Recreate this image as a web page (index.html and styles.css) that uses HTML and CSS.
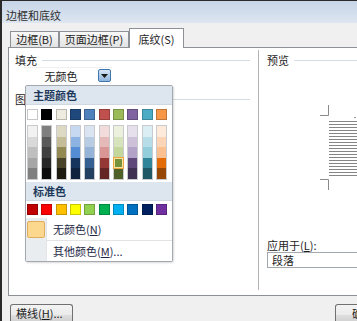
FILE: index.html
```html
<!DOCTYPE html>
<html lang="zh-CN">
<head>
<meta charset="utf-8">
<title>边框和底纹</title>
<link rel="stylesheet" href="styles.css">
</head>
<body>
<div class="window">
  <div class="titlebar">边框和底纹</div>
  <div class="tabs">
    <div class="tab tab1">边框(B)</div>
    <div class="tab tab2">页面边框(P)</div>
    <div class="tab tab3 active">底纹(S)</div>
  </div>
  <div class="panel">
    <div class="left">
      <div class="group"><span>填充</span><i class="rule"></i></div>
      <div class="combo">
        <span class="combo-text">无颜色</span>
        <span class="combo-btn"><svg width="7" height="4" viewBox="0 0 7 4"><path d="M0 0h7L3.5 4z" fill="#1a1a1a"/></svg></span>
      </div>
      <div class="group group2"><span>图案</span><i class="rule"></i></div>

      <div class="popup">
        <div class="phead">主题颜色</div>
        <div class="grid row1">
          <i class="sw" style="background:#ffffff"></i>
          <i class="sw" style="background:#000000"></i>
          <i class="sw" style="background:#eeece1"></i>
          <i class="sw" style="background:#1f497d"></i>
          <i class="sw" style="background:#4f81bd"></i>
          <i class="sw" style="background:#c0504d"></i>
          <i class="sw" style="background:#9bbb59"></i>
          <i class="sw" style="background:#8064a2"></i>
          <i class="sw" style="background:#4bacc6"></i>
          <i class="sw" style="background:#f79646"></i>
        </div>
        <div class="grid shades">
          <div class="col"><i style="background:#f2f2f2"></i><i style="background:#d9d9d9"></i><i style="background:#bfbfbf"></i><i style="background:#a6a6a6"></i><i style="background:#808080"></i></div>
          <div class="col"><i style="background:#7f7f7f"></i><i style="background:#595959"></i><i style="background:#3f3f3f"></i><i style="background:#262626"></i><i style="background:#0c0c0c"></i></div>
          <div class="col"><i style="background:#ddd9c3"></i><i style="background:#c4bd97"></i><i style="background:#938953"></i><i style="background:#494429"></i><i style="background:#1d1b10"></i></div>
          <div class="col"><i style="background:#c6d9f0"></i><i style="background:#8db3e2"></i><i style="background:#548dd4"></i><i style="background:#17365d"></i><i style="background:#0f243e"></i></div>
          <div class="col"><i style="background:#dbe5f1"></i><i style="background:#b8cce4"></i><i style="background:#95b3d7"></i><i style="background:#366092"></i><i style="background:#244061"></i></div>
          <div class="col"><i style="background:#f2dcdb"></i><i style="background:#e5b9b7"></i><i style="background:#d99694"></i><i style="background:#953734"></i><i style="background:#632423"></i></div>
          <div class="col"><i style="background:#ebf1dd"></i><i style="background:#d7e3bc"></i><i style="background:#c3d69b"></i><i class="sel" style="background:#76923c"></i><i style="background:#4f6128"></i></div>
          <div class="col"><i style="background:#e5e0ec"></i><i style="background:#ccc1d9"></i><i style="background:#b2a2c7"></i><i style="background:#5f497a"></i><i style="background:#3f3151"></i></div>
          <div class="col"><i style="background:#dbeef3"></i><i style="background:#b7dde8"></i><i style="background:#92cddc"></i><i style="background:#31859b"></i><i style="background:#205867"></i></div>
          <div class="col"><i style="background:#fdeada"></i><i style="background:#fbd5b5"></i><i style="background:#fac08f"></i><i style="background:#e36c09"></i><i style="background:#974806"></i></div>
        </div>
        <div class="phead phead2">标准色</div>
        <div class="grid std">
          <i class="sw" style="background:#c00000"></i>
          <i class="sw" style="background:#ff0000"></i>
          <i class="sw" style="background:#ffc000"></i>
          <i class="sw" style="background:#ffff00"></i>
          <i class="sw" style="background:#92d050"></i>
          <i class="sw" style="background:#00b050"></i>
          <i class="sw" style="background:#00b0f0"></i>
          <i class="sw" style="background:#0070c0"></i>
          <i class="sw" style="background:#002060"></i>
          <i class="sw" style="background:#7030a0"></i>
        </div>
        <div class="menu">
          <div class="item"><span class="ico"></span><span class="txt">无颜色(<u>N</u>)</span></div>
          <div class="msep"></div>
          <div class="item item2"><span class="txt">其他颜色(<u>M</u>)...</span></div>
        </div>
      </div>
    </div>
    <div class="vsep"></div>
    <div class="right">
      <div class="group"><span>预览</span><i class="rule"></i></div>
      <svg class="preview" width="100" height="125" viewBox="0 0 100 125">
        <g stroke="#8a8a8a" stroke-width="1" fill="none">
          <path d="M53 48.5H61.5V38"/>
          <path d="M53 112.5H61.5V123"/>
        </g>
        <rect x="87" y="50" width="2" height="1" fill="#9a9a9a"/>
        <g fill="#858585">
          <rect x="62" y="54" width="40" height="1"/>
          <rect x="62" y="57" width="40" height="1"/>
          <rect x="62" y="60" width="40" height="1"/>
          <rect x="62" y="63" width="40" height="1"/>
          <rect x="62" y="66" width="40" height="1"/>
          <rect x="62" y="69" width="40" height="1"/>
          <rect x="62" y="72" width="40" height="1"/>
          <rect x="62" y="75" width="40" height="1"/>
          <rect x="62" y="78" width="40" height="1"/>
          <rect x="62" y="81" width="40" height="1"/>
          <rect x="62" y="84" width="40" height="1"/>
          <rect x="62" y="87" width="40" height="1"/>
          <rect x="62" y="90" width="40" height="1"/>
          <rect x="62" y="93" width="40" height="1"/>
          <rect x="62" y="96" width="40" height="1"/>
          <rect x="62" y="99" width="40" height="1"/>
          <rect x="62" y="102" width="40" height="1"/>
          <rect x="62" y="105" width="40" height="1"/>
          <rect x="62" y="108" width="40" height="1"/>
        </g>
      </svg>
      <div class="apply">应用于(<u>L</u>):</div>
      <div class="select">段落</div>
    </div>
  </div>
  <div class="footer">
    <div class="btn btn-left">横线(<u>H</u>)...</div>
    <div class="btn btn-right">确定</div>
  </div>
</div>
</body>
</html>
```

FILE: styles.css
```css
* { box-sizing: border-box; margin: 0; padding: 0; }
html, body { width: 357px; height: 321px; overflow: hidden; }
body {
  background: #f0f0f0;
  font-family: "Noto Sans CJK SC", "Liberation Sans", sans-serif;
  font-size: 11px;
  color: #1c1c1c;
}
i { display: block; font-style: normal; }
u { text-decoration: underline; text-underline-offset: 1px; }

.window {
  width: 440px;
  height: 321px;
  overflow: hidden;
  border-left: 2px solid #2a2a2a;
  border-top: 1px solid #2a2a2a;
  background: #f0f0f0;
}

.titlebar {
  height: 22px;
  padding: 7px 0 0 4px;
  line-height: 14px;
  background: linear-gradient(#c7d5e7, #dde6f1);
  color: #2e2e2e;
}

.tabs {
  height: 24px;
  display: flex;
  align-items: flex-end;
  padding-left: 8px;
}
.tab {
  height: 16px;
  line-height: 14px;
  border: 1px solid #8d9095;
  border-bottom: none;
  background: linear-gradient(#f8f8f8, #e3e3e3);
  text-align: center;
  white-space: nowrap;
}
.tab1 { width: 49px; }
.tab2 { width: 70px; }
.tab3 { width: 55px; }
.tab.active {
  height: 20px;
  padding-top: 3px;
  margin-bottom: -1px;
  background: #fff;
  position: relative;
  z-index: 1;
}

.panel {
  margin-left: 6px;
  height: 249px;
  border: 1px solid #8d9095;
  background: #fff;
  display: flex;
}

.left {
  width: 249px;
  position: relative;
  padding: 6px 8px 0 6px;
}
.group {
  display: flex;
  align-items: center;
  height: 13px;
  line-height: 13px;
  white-space: nowrap;
}
.group .rule {
  flex: 1;
  height: 1px;
  margin-left: 5px;
  background: #d5dce2;
}
.group2 { margin-top: 9px; height: 14px; }

.combo {
  margin-left: 9px;
  width: 88px;
  height: 16px;
  display: flex;
  align-items: center;
  border-top: 1px solid #eef0f2;
}
.combo-text {
  width: 74px;
  text-align: center;
  line-height: 14px;
}
.combo-btn {
  width: 13px;
  height: 13px;
  border: 1px solid #3f77ad;
  border-radius: 2px;
  background: linear-gradient(#d6e6f7, #8fb5dd);
  display: flex;
  align-items: center;
  justify-content: center;
}

.popup {
  position: absolute;
  left: 16px;
  top: 37px;
  width: 148px;
  height: 177px;
  border: 1px solid #a4a9af;
  border-radius: 2px;
  background: #fff;
  box-shadow: 1px 1px 2px rgba(0, 0, 0, 0.15);
  z-index: 5;
  display: flex;
  flex-direction: column;
}
.phead {
  height: 19px;
  line-height: 19px;
  padding-left: 7px;
  background: #dde6ee;
  border-bottom: 1px solid #cfd8e0;
  font-weight: bold;
  color: #1e395b;
}
.phead2 { margin-top: 2px; }
.grid {
  display: grid;
  grid-template-columns: repeat(10, 11px);
  column-gap: 3.33px;
  padding-left: 1px;
}
.sw {
  height: 11px;
  border: 1px solid rgba(0, 0, 0, 0.22);
}
.row1 { margin-top: 4px; }
.shades { margin-top: 5px; }
.col {
  height: 55px;
  border: 1px solid #c8cacd;
  display: flex;
  flex-direction: column;
}
.col i { flex: 1; }
.col i.sel {
  box-shadow: 0 0 0 1px #eea642, inset 0 0 0 1px #fde3a0;
  position: relative;
}
.std { margin-top: 3px; }

.menu {
  margin-top: 3px;
  flex: 1;
  display: flex;
  flex-direction: column;
  background: linear-gradient(to right, #eaedf0 20px, #e2e5e8 20px, #e2e5e8 21px, #fff 21px);
  color: #1e2846;
}
.item {
  height: 22px;
  display: flex;
  align-items: center;
  padding-left: 1px;
  white-space: nowrap;
}
.ico {
  width: 18px;
  height: 17px;
  background: #fcd88e;
  border: 1px solid #e1ae5e;
  border-radius: 2px;
}
.item .txt { margin-left: 8px; }
.item2 { padding-left: 19px; flex: 1; }
.msep {
  height: 1px;
  margin-left: 21px;
  background: #e1e3e5;
}

.vsep {
  width: 2px;
  margin: 2px 0 5px;
  border-left: 1px solid #b4b4b4;
  border-right: 1px solid #fff;
}

.right {
  flex: 1;
  padding: 6px 0 0 7px;
  display: flex;
  flex-direction: column;
}
.preview { display: block; }
.apply {
  margin-top: 46px;
  height: 14px;
  line-height: 14px;
}
.select {
  height: 16px;
  line-height: 14px;
  border: 1px solid #a3a8ae;
  padding-left: 4px;
  background: #fff;
}

.footer {
  display: flex;
  padding: 8px 0 0 8px;
}
.btn {
  height: 17px;
  line-height: 17px;
  border: 1px solid #707070;
  border-bottom: none;
  border-radius: 3px 3px 0 0;
  background: linear-gradient(#f3f3f3 0%, #ebebeb 60%, #dddddd 65%, #d3d3d3 100%);
  white-space: nowrap;
}
.btn-left { width: 63px; padding-left: 5px; }
.btn-right { width: 60px; margin-left: 262px; padding-left: 16px; }
```
